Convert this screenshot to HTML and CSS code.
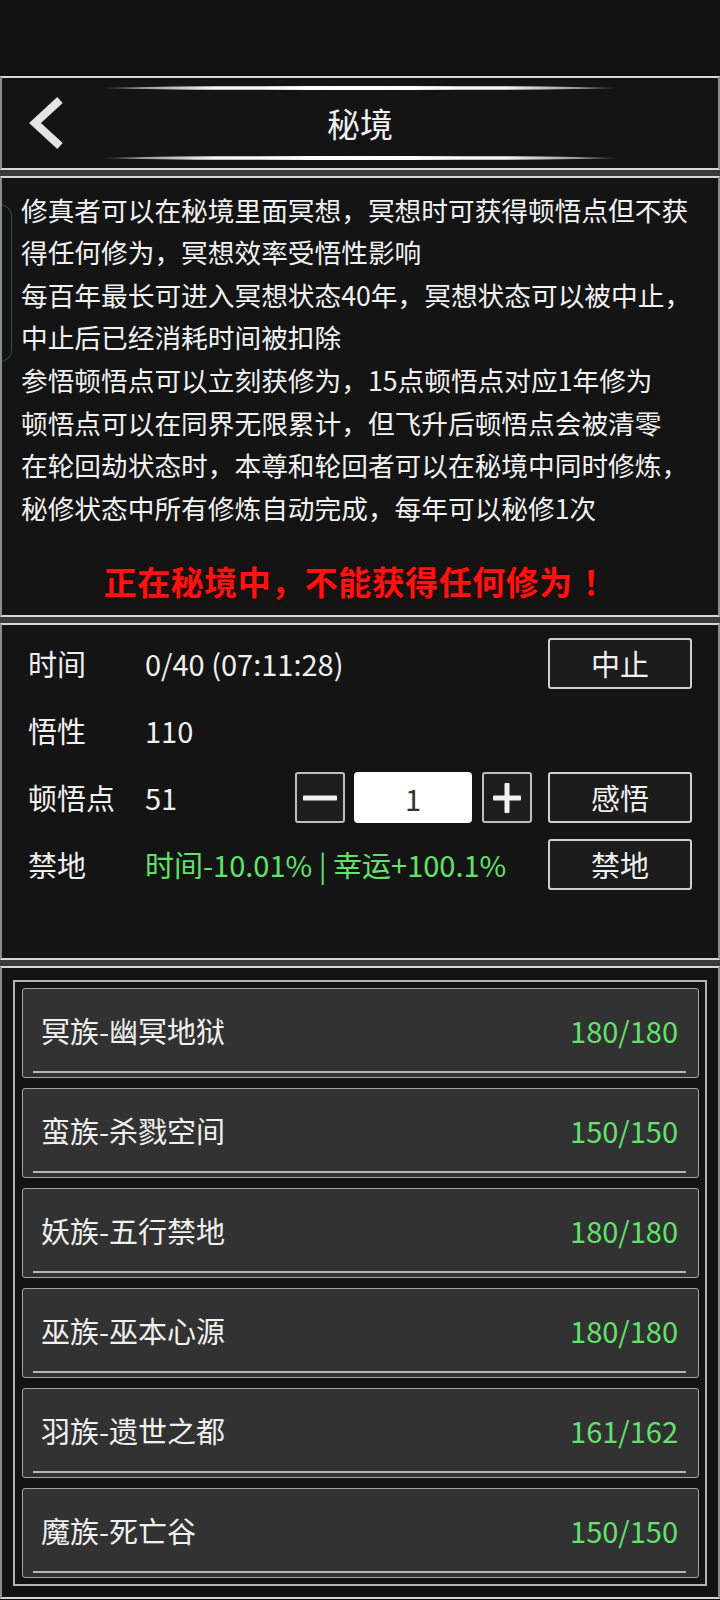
FILE: index.html
```html
<!DOCTYPE html>
<html lang="zh-CN">
<head>
<meta charset="utf-8">
<title>秘境</title>
<link rel="stylesheet" href="styles.css">
</head>
<body>
<div class="status"></div>
<div class="screen">
  <header class="topbar">
    <div class="deco"></div>
    <div class="bar-row">
      <div class="back">
        <svg width="50" height="66" viewBox="0 0 50 66"><polyline points="40,10 15,33 40,56" fill="none" stroke="#e4e4e4" stroke-width="8" stroke-linejoin="miter"/></svg>
      </div>
      <h1 class="title">秘境</h1>
      <div></div>
    </div>
    <div class="deco"></div>
  </header>

  <section class="panel intro">
    <div class="glow"></div>
    <div class="intro-text">
      <p>修真者可以在秘境里面冥想，冥想时可获得顿悟点但不获得任何修为，冥想效率受悟性影响</p>
      <p>每百年最长可进入冥想状态40年，冥想状态可以被中止，中止后已经消耗时间被扣除</p>
      <p>参悟顿悟点可以立刻获修为，15点顿悟点对应1年修为</p>
      <p>顿悟点可以在同界无限累计，但飞升后顿悟点会被清零</p>
      <p>在轮回劫状态时，本尊和轮回者可以在秘境中同时修炼，</p>
      <p>秘修状态中所有修炼自动完成，每年可以秘修1次</p>
    </div>
    <div class="warning">正在秘境中，不能获得任何修为<span class="bang">！</span></div>
  </section>

  <section class="panel stats">
    <div class="stat-row">
      <span class="label">时间</span>
      <span class="value">0/40 (07:11:28)</span>
      <button class="btn">中止</button>
    </div>
    <div class="stat-row">
      <span class="label">悟性</span>
      <span class="value">110</span>
      <span></span>
    </div>
    <div class="stat-row">
      <span class="label">顿悟点</span>
      <span class="value">51</span>
      <div class="controls">
        <button class="step"><svg width="34" height="6" viewBox="0 0 34 6"><rect x="0" y="0.5" width="34" height="5" rx="1" fill="#f2f2f2"/></svg></button>
        <input class="qty" type="text" value="1" readonly>
        <button class="step"><svg width="28" height="30" viewBox="0 0 28 30"><rect x="0" y="12.5" width="28" height="5" rx="1" fill="#f2f2f2"/><rect x="11.5" y="0" width="5" height="30" rx="1" fill="#f2f2f2"/></svg></button>
        <button class="btn">感悟</button>
      </div>
    </div>
    <div class="stat-row">
      <span class="label">禁地</span>
      <span class="value green">时间-10.01% | 幸运+100.1%</span>
      <button class="btn">禁地</button>
    </div>
  </section>

  <section class="panel list-panel">
    <div class="frame">
      <div class="card"><div class="card-row"><span>冥族-幽冥地狱</span><span class="green">180/180</span></div><div class="card-line"></div></div>
      <div class="card"><div class="card-row"><span>蛮族-杀戮空间</span><span class="green">150/150</span></div><div class="card-line"></div></div>
      <div class="card"><div class="card-row"><span>妖族-五行禁地</span><span class="green">180/180</span></div><div class="card-line"></div></div>
      <div class="card"><div class="card-row"><span>巫族-巫本心源</span><span class="green">180/180</span></div><div class="card-line"></div></div>
      <div class="card"><div class="card-row"><span>羽族-遗世之都</span><span class="green">161/162</span></div><div class="card-line"></div></div>
      <div class="card"><div class="card-row"><span>魔族-死亡谷</span><span class="green">150/150</span></div><div class="card-line"></div></div>
    </div>
  </section>
</div>
</body>
</html>
```

FILE: styles.css
```css
* { box-sizing: border-box; }

html, body {
  margin: 0;
  padding: 0;
  background: #111111;
  font-family: "Noto Sans CJK SC", "Noto Sans", sans-serif;
  color: #eeeeee;
}

.status {
  height: 76px;
  background: #111111;
}

.screen {
  display: flex;
  flex-direction: column;
  gap: 6px;
  background: #3b3b3b;
}

.topbar,
.panel {
  background: #141414;
  border-top: 2px solid #d6d6d6;
  border-bottom: 2px solid #d6d6d6;
  border-left: 2px solid #8c8c8c;
  border-right: 2px solid #8c8c8c;
}

/* header */
.topbar {
  height: 94px;
  padding: 8px 0;
  display: flex;
  flex-direction: column;
  align-items: center;
}

.deco {
  width: 516px;
  height: 4px;
  border-radius: 50%;
  background: linear-gradient(90deg, rgba(255,255,255,0) 0%, rgba(210,210,210,0.7) 8%, #f6f6f6 22%, #ffffff 50%, #f6f6f6 78%, rgba(210,210,210,0.7) 92%, rgba(255,255,255,0) 100%);
}

.bar-row {
  width: 100%;
  height: 66px;
  display: grid;
  grid-template-columns: 1fr auto 1fr;
  align-items: center;
}

.back {
  display: flex;
  padding-left: 18px;
}

.back svg { display: block; }

.title {
  margin: 0;
  font-size: 33px;
  font-weight: 400;
  line-height: 66px;
  color: #f0f0f0;
}

/* intro panel */
.intro {
  height: 441px;
  position: relative;
  overflow: hidden;
}

.glow {
  position: absolute;
  left: -24px;
  top: 26px;
  width: 34px;
  height: 158px;
  border: 1.5px solid #2c5a38;
  border-radius: 12px;
}

.intro-text {
  padding: 10.7px 19px 0 19px;
  font-size: 26.7px;
  line-height: 42.6px;
  color: #f2f2f2;
}

.intro-text p {
  margin: 0;
}

.warning {
  margin-top: 31px;
  text-align: center;
  font-size: 33px;
  line-height: 42px;
  font-weight: 700;
  letter-spacing: 0.5px;
  color: #ff1212;
  text-shadow: 0 0 2px #3a0000, 1px 1px 1px #300000;
}

.warning .bang {
  display: inline-block;
  margin-left: 10px;
}

/* stats panel */
.stats {
  height: 337px;
  padding: 13px 26px 0 26px;
  display: flex;
  flex-direction: column;
  gap: 16px;
}

.stat-row {
  height: 51px;
  display: grid;
  grid-template-columns: 117px 1fr auto;
  align-items: center;
  font-size: 29px;
  color: #f0f0f0;
}

.label, .value {
  line-height: 51px;
  white-space: nowrap;
}

.green { color: #62e26b; }

.btn {
  width: 144px;
  height: 51px;
  margin: 0;
  padding: 0;
  background: #1c1c1c;
  border: 2px solid #cfcfcf;
  border-radius: 3px;
  color: #f0f0f0;
  font-family: "Noto Sans CJK SC", "Noto Sans", sans-serif;
  font-size: 29px;
  line-height: 47px;
}

.controls {
  display: flex;
  align-items: center;
}

.step {
  width: 50px;
  height: 51px;
  margin: 0 9px 0 0;
  padding: 0;
  background: #1e1e1e;
  border: 2px solid #bdbdbd;
  border-radius: 3px;
  display: flex;
  align-items: center;
  justify-content: center;
}

.step svg { display: block; }

.qty {
  width: 118px;
  height: 51px;
  margin: 0 10px 0 0;
  padding: 0;
  border: none;
  border-radius: 4px;
  background: #ffffff;
  color: #333333;
  text-align: center;
  font-family: "Noto Sans CJK SC", "Noto Sans", sans-serif;
  font-size: 29px;
  outline: none;
}

.controls .step + .btn { margin-left: 7px; }

/* list panel */
.list-panel {
  padding: 12px 11px 11px 11px;
}

.frame {
  border: 2px solid #b4b4b4;
  padding: 6px 6px 6px 7px;
  display: flex;
  flex-direction: column;
  gap: 10px;
}

.card {
  height: 90px;
  background: #323232;
  border: 1px solid #a6a6a6;
  border-radius: 3px;
  padding: 0 12px 4px 10px;
  display: flex;
  flex-direction: column;
}

.card-row {
  height: 81px;
  padding: 0 8px;
  display: flex;
  align-items: center;
  justify-content: space-between;
  font-size: 29px;
  color: #f0f0f0;
}

.card-line {
  height: 2px;
  margin-top: 1px;
  background: #b6b6b6;
}
```
